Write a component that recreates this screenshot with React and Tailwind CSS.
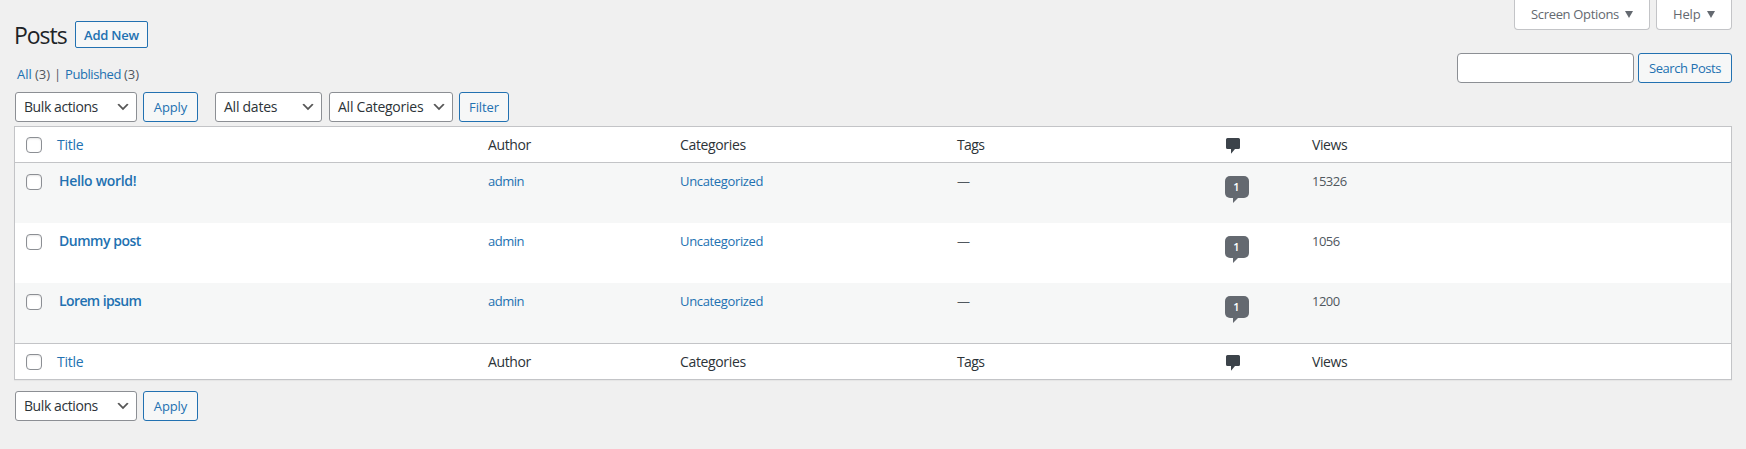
import React from "react";

const COLS = "grid grid-cols-[42px_431px_192px_277px_268px_87px_1fr]";

const POSTS = [
  { title: "Hello world!", titleClass: "tracking-[-0.32px]", views: "15326" },
  { title: "Dummy post", titleClass: "tracking-[-0.47px]", views: "1056" },
  { title: "Lorem ipsum", titleClass: "tracking-[-0.6px]", views: "1200" },
];

function Checkbox({ className }) {
  return (
    <input
      type="checkbox"
      className={`ml-[11px] block size-4 appearance-none rounded-[4px] border border-[#8c8f94] bg-white shadow-[inset_0_1px_2px_rgba(0,0,0,0.1)] ${className}`}
    />
  );
}

function Button({ className, children }) {
  return (
    <button
      type="button"
      className={`h-[30px] shrink-0 rounded-[3px] border border-[#2271b1] bg-[#f6f7f7] text-center text-[13px] leading-[28px] whitespace-nowrap text-[#2271b1] ${className}`}
    >
      {children}
    </button>
  );
}

function Select({ className, label, labelClass }) {
  return (
    <button
      type="button"
      className={`flex h-[30px] shrink-0 items-center justify-between rounded-[3px] border border-[#8c8f94] bg-white pr-[5px] pl-2 text-[14px] leading-[28px] whitespace-nowrap text-[#2c3338] ${className}`}
    >
      <span className={labelClass}>{label}</span>
      <svg className="size-4 shrink-0" viewBox="0 0 20 20" fill="#555">
        <path d="M5 6l5 5 5-5 2 1-7 7-7-7 2-1z" />
      </svg>
    </button>
  );
}

function BulkActions() {
  return (
    <>
      <Select className="w-[122px]" label="Bulk actions" labelClass="tracking-[-0.42px]" />
      <Button className="ml-[6px] w-[55px] tracking-[-0.1px]">Apply</Button>
    </>
  );
}

function HeadRow() {
  return (
    <div className={`${COLS} h-[35px] pt-2 text-[14px] leading-5 text-[#2c3338]`}>
      <Checkbox className="mt-[2px]" />
      <div className="tracking-[-0.25px] text-[#2271b1]">Title</div>
      <div className="tracking-[-0.4px]">Author</div>
      <div className="tracking-[-0.35px]">Categories</div>
      <div className="tracking-[-0.65px]">Tags</div>
      <div>
        <svg className="mt-[3px] ml-px block h-4 w-[14px]" viewBox="0 0 14 16" fill="#3c434a">
          <path d="M1.5 0h11Q14 0 14 1.5v8Q14 11 12.5 11H9l-4 4.7V11H1.5Q0 11 0 9.5v-8Q0 0 1.5 0z" />
        </svg>
      </div>
      <div className="tracking-[-0.42px]">Views</div>
    </div>
  );
}

function PostRow({ post }) {
  return (
    <div className={`${COLS} h-[60px] pt-2 text-[13px] leading-5 odd:bg-[#f6f7f7] even:bg-white`}>
      <Checkbox className="mt-[3px]" />
      <div className={`pl-[2px] text-[14px] font-semibold text-[#2271b1] ${post.titleClass}`}>{post.title}</div>
      <div className="tracking-[-0.5px] text-[#2271b1]">admin</div>
      <div className="tracking-[-0.35px] text-[#2271b1]">Uncategorized</div>
      <div className="text-[#50575e]">—</div>
      <div className="pt-[5px]">
        <div className="h-[22px] w-6 rounded-[5px] bg-[#646970] pr-px text-center text-[11px] leading-[22px] font-semibold text-white">1</div>
        <svg className="ml-2 block h-[5px] w-[5px]" viewBox="0 0 5 5" fill="#646970">
          <path d="M0 0h5L0 5z" />
        </svg>
      </div>
      <div className="tracking-[-0.5px] text-[#50575e]">{post.views}</div>
    </div>
  );
}

function ScreenTab({ className, labelClass, label }) {
  return (
    <button
      type="button"
      className={`flex h-[30px] items-start rounded-b-[4px] border border-t-0 border-[#c3c4c7] bg-white pl-4 text-[13px] leading-[28px] whitespace-nowrap text-[#646970] ${className}`}
    >
      <span className={labelClass}>{label}</span>
      <svg className="mt-[11px] ml-[6px] h-[7px] w-2" viewBox="0 0 8 7" fill="#646970">
        <path d="M0 0h8L4 7z" />
      </svg>
    </button>
  );
}

export default function App() {
  return (
    <div className="h-[449px] w-[1746px] bg-[#f0f0f0] px-[14px] font-['Open_Sans','Noto_Sans',sans-serif]">
      <div className="flex h-[126px] justify-between pl-px">
        <div className="pt-[18px]">
          <div className="flex items-start">
            <h1 className="-ml-px w-[61px] pt-px text-[23px] leading-8 tracking-[-1.05px] text-[#1d2327]">Posts</h1>
            <button
              type="button"
              className="mt-[3px] h-[27px] w-[73px] rounded-[2px] border border-[#2271b1] bg-[#f6f7f7] pt-px text-center text-[13px] leading-[25px] font-semibold tracking-[-0.2px] text-[#2271b1]"
            >
              Add New
            </button>
          </div>
          <div className="mt-[13px] flex pl-[2px] text-[13px] leading-5 text-[#50575e]">
            <span className="w-[18px] text-[#2271b1]">All</span>
            <span className="w-[19px]">(3)</span>
            <span className="w-[11px]">|</span>
            <span className="w-[59px] tracking-[-0.42px] text-[#2271b1]">Published</span>
            <span>(3)</span>
          </div>
          <div className="mt-2 flex">
            <BulkActions />
            <Select className="ml-[17px] w-[107px]" label="All dates" labelClass="tracking-[-0.25px]" />
            <Select className="ml-[7px] w-[124px]" label="All Categories" labelClass="tracking-[-0.25px]" />
            <Button className="ml-[6px] w-[50px] tracking-[-0.1px]">Filter</Button>
          </div>
        </div>
        <div>
          <div className="flex justify-end gap-[6px]">
            <ScreenTab className="w-[136px]" label="Screen Options" labelClass="tracking-[-0.33px]" />
            <ScreenTab className="w-[76px]" label="Help" labelClass="tracking-[-0.15px]" />
          </div>
          <div className="mt-[23px] flex justify-end gap-1">
            <input
              type="text"
              className="h-[30px] w-[177px] rounded-[4px] border border-[#8c8f94] bg-white px-2 text-[14px]"
            />
            <Button className="w-[94px] tracking-[-0.43px]">Search Posts</Button>
          </div>
        </div>
      </div>
      <div className="border border-[#c3c4c7] bg-white shadow-[0_1px_1px_rgba(0,0,0,0.04)]">
        <HeadRow />
        <div className="border-y border-[#c3c4c7]">
          {POSTS.map((post) => (
            <PostRow key={post.title} post={post} />
          ))}
        </div>
        <HeadRow />
      </div>
      <div className="mt-[11px] flex pl-px">
        <BulkActions />
      </div>
    </div>
  );
}
